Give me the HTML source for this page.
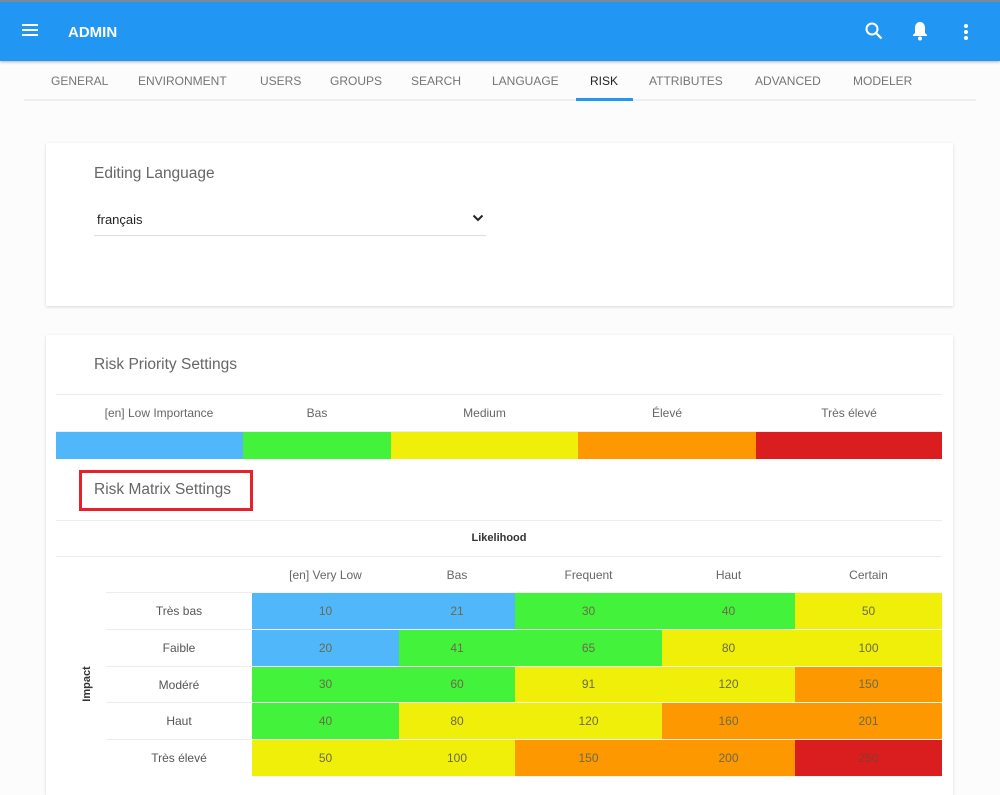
<!DOCTYPE html>
<html><head><meta charset="utf-8"><style>
*{margin:0;padding:0;box-sizing:border-box}
body{width:1000px;height:787px;overflow:hidden;background:#fcfcfc;font-family:"Liberation Sans",sans-serif;position:relative}
.a{position:absolute}
.hdr{left:0;top:0;width:1000px;height:61px;background:#2196f3;border-top:2px solid #7a8a99;box-shadow:0 1px 3px rgba(0,0,0,.3)}
.tab{top:74px;font-size:12px;color:#757575}
.card{background:#fff;box-shadow:0 1px 3px rgba(0,0,0,.15)}
.t{color:#666;font-size:15.5px}
.c{text-align:center;font-size:12px;color:#666}
.cell{font-size:12px;color:#6b6b4a;text-align:center;line-height:36px}
.lbl{font-size:12px;color:#555;text-align:center;line-height:36px}
.hl{height:1px;background:#ececec}
</style></head><body>
<div class="a hdr"></div>
<div class="a" style="left:22px;top:24px;width:16px;height:2px;background:#fff;box-shadow:0 5px 0 #fff,0 10px 0 #fff"></div>
<div class="a" style="left:68px;top:24px;color:#fff;font-weight:bold;font-size:15px">ADMIN</div>
<svg class="a" style="left:864px;top:21px" width="20" height="20" viewBox="0 0 20 20"><circle cx="8" cy="8" r="5.5" fill="none" stroke="#fff" stroke-width="2"/><path d="M12 12l5.5 5.5" stroke="#fff" stroke-width="2.2"/></svg>
<svg class="a" style="left:910px;top:20px" width="20" height="22" viewBox="0 0 20 22"><path d="M10 2c-3.5 0-5 3-5 6v5l-2 2v1h14v-1l-2-2V8c0-3-1.5-6-5-6z" fill="#fff"/><circle cx="10" cy="18.5" r="2" fill="#fff"/></svg>
<div class="a" style="left:964px;top:24px;width:4px;height:4px;border-radius:2px;background:#fff;box-shadow:0 6px 0 #fff,0 12px 0 #fff"></div>

<div class="a tab" style="left:51px">GENERAL</div>
<div class="a tab" style="left:138px">ENVIRONMENT</div>
<div class="a tab" style="left:260px">USERS</div>
<div class="a tab" style="left:330px">GROUPS</div>
<div class="a tab" style="left:411px">SEARCH</div>
<div class="a tab" style="left:492px">LANGUAGE</div>
<div class="a tab" style="left:590px;color:#222">RISK</div>
<div class="a tab" style="left:649px">ATTRIBUTES</div>
<div class="a tab" style="left:755px">ADVANCED</div>
<div class="a tab" style="left:853px">MODELER</div>
<div class="a" style="left:24px;top:99px;width:952px;height:2px;background:#eee"></div>
<div class="a" style="left:576px;top:98px;width:57px;height:3px;background:#2196f3"></div>

<div class="a card" style="left:46px;top:143px;width:907px;height:163px"></div>
<div class="a t" style="left:94px;top:165px">Editing Language</div>
<div class="a" style="left:97px;top:212px;font-size:13px;color:#222">français</div>
<svg class="a" style="left:472px;top:213px" width="12" height="10" viewBox="0 0 12 10"><path d="M1.5 2.5l4.5 4.5 4.5-4.5" fill="none" stroke="#222" stroke-width="2"/></svg>
<div class="a" style="left:94px;top:235px;width:392px;height:1px;background:#ddd"></div>

<div class="a card" style="left:46px;top:335px;width:907px;height:460px"></div>
<div class="a t" style="left:94px;top:356px">Risk Priority Settings</div>
<div class="a hl" style="left:56px;top:394px;width:886px"></div>
<div class="a c" style="left:56px;top:406px;width:206px">[en] Low Importance</div>
<div class="a c" style="left:243px;top:406px;width:148px">Bas</div>
<div class="a c" style="left:391px;top:406px;width:187px">Medium</div>
<div class="a c" style="left:578px;top:406px;width:178px">Élevé</div>
<div class="a c" style="left:756px;top:406px;width:186px">Très élevé</div>
<div class="a hl" style="left:56px;top:431px;width:886px"></div>
<div class="a" style="left:56px;top:432px;width:187px;height:27px;background:#51b7fb"></div>
<div class="a" style="left:243px;top:432px;width:148px;height:27px;background:#43f23b"></div>
<div class="a" style="left:391px;top:432px;width:187px;height:27px;background:#f0ef09"></div>
<div class="a" style="left:578px;top:432px;width:178px;height:27px;background:#fd9801"></div>
<div class="a" style="left:756px;top:432px;width:186px;height:27px;background:#da1e1f"></div>

<div class="a" style="left:79px;top:470px;width:174px;height:41px;border:3px solid #e8202a"></div>
<div class="a t" style="left:94px;top:481px">Risk Matrix Settings</div>
<div class="a hl" style="left:56px;top:520px;width:886px"></div>
<div class="a" style="left:56px;top:532px;width:886px;text-align:center;font-size:11px;font-weight:bold;color:#333">Likelihood</div>
<div class="a hl" style="left:56px;top:556px;width:886px"></div>
<div class="a" style="left:62px;top:678px;transform:rotate(-90deg);transform-origin:center;width:50px;text-align:center;font-size:11px;font-weight:bold;color:#333">Impact</div>

<div class="a c" style="left:252px;top:568px;width:147px">[en] Very Low</div>
<div class="a c" style="left:399px;top:568px;width:116px">Bas</div>
<div class="a c" style="left:515px;top:568px;width:147px">Frequent</div>
<div class="a c" style="left:662px;top:568px;width:133px">Haut</div>
<div class="a c" style="left:795px;top:568px;width:147px">Certain</div>

<div class="a hl" style="left:106px;top:592px;width:146px"></div>
<div class="a hl" style="left:106px;top:629px;width:146px"></div>
<div class="a hl" style="left:106px;top:666px;width:146px"></div>
<div class="a hl" style="left:106px;top:702px;width:146px"></div>
<div class="a hl" style="left:106px;top:739px;width:146px"></div>
<div class="a" style="left:252px;top:592px;width:690px;height:185px;background:#f4f4f4"></div>

<div class="a lbl" style="left:106px;top:593px;width:146px">Très bas</div>
<div class="a lbl" style="left:106px;top:630px;width:146px">Faible</div>
<div class="a lbl" style="left:106px;top:667px;width:146px">Modéré</div>
<div class="a lbl" style="left:106px;top:703px;width:146px">Haut</div>
<div class="a lbl" style="left:106px;top:740px;width:146px">Très élevé</div>

<div class="a" style="left:252px;top:593px;width:263px;height:36px;background:#51b7fb"></div>
<div class="a" style="left:515px;top:593px;width:280px;height:36px;background:#43f23b"></div>
<div class="a" style="left:795px;top:593px;width:147px;height:36px;background:#f0ef09"></div>
<div class="a" style="left:252px;top:630px;width:147px;height:36px;background:#51b7fb"></div>
<div class="a" style="left:399px;top:630px;width:263px;height:36px;background:#43f23b"></div>
<div class="a" style="left:662px;top:630px;width:280px;height:36px;background:#f0ef09"></div>
<div class="a" style="left:252px;top:667px;width:263px;height:35px;background:#43f23b"></div>
<div class="a" style="left:515px;top:667px;width:280px;height:35px;background:#f0ef09"></div>
<div class="a" style="left:795px;top:667px;width:147px;height:35px;background:#fd9801"></div>
<div class="a" style="left:252px;top:703px;width:147px;height:36px;background:#43f23b"></div>
<div class="a" style="left:399px;top:703px;width:263px;height:36px;background:#f0ef09"></div>
<div class="a" style="left:662px;top:703px;width:280px;height:36px;background:#fd9801"></div>
<div class="a" style="left:252px;top:740px;width:263px;height:36px;background:#f0ef09"></div>
<div class="a" style="left:515px;top:740px;width:280px;height:36px;background:#fd9801"></div>
<div class="a" style="left:795px;top:740px;width:147px;height:36px;background:#da1e1f"></div>

<div class="a cell" style="left:252px;top:593px;width:147px">10</div><div class="a cell" style="left:399px;top:593px;width:116px">21</div><div class="a cell" style="left:515px;top:593px;width:147px">30</div><div class="a cell" style="left:662px;top:593px;width:133px">40</div><div class="a cell" style="left:795px;top:593px;width:147px">50</div>
<div class="a cell" style="left:252px;top:630px;width:147px">20</div><div class="a cell" style="left:399px;top:630px;width:116px">41</div><div class="a cell" style="left:515px;top:630px;width:147px">65</div><div class="a cell" style="left:662px;top:630px;width:133px">80</div><div class="a cell" style="left:795px;top:630px;width:147px">100</div>
<div class="a cell" style="left:252px;top:666px;width:147px">30</div><div class="a cell" style="left:399px;top:666px;width:116px">60</div><div class="a cell" style="left:515px;top:666px;width:147px">91</div><div class="a cell" style="left:662px;top:666px;width:133px">120</div><div class="a cell" style="left:795px;top:666px;width:147px">150</div>
<div class="a cell" style="left:252px;top:703px;width:147px">40</div><div class="a cell" style="left:399px;top:703px;width:116px">80</div><div class="a cell" style="left:515px;top:703px;width:147px">120</div><div class="a cell" style="left:662px;top:703px;width:133px">160</div><div class="a cell" style="left:795px;top:703px;width:147px">201</div>
<div class="a cell" style="left:252px;top:740px;width:147px">50</div><div class="a cell" style="left:399px;top:740px;width:116px">100</div><div class="a cell" style="left:515px;top:740px;width:147px">150</div><div class="a cell" style="left:662px;top:740px;width:133px">200</div><div class="a cell" style="left:795px;top:740px;width:147px;color:#8a3a2a">250</div>
</body></html>
